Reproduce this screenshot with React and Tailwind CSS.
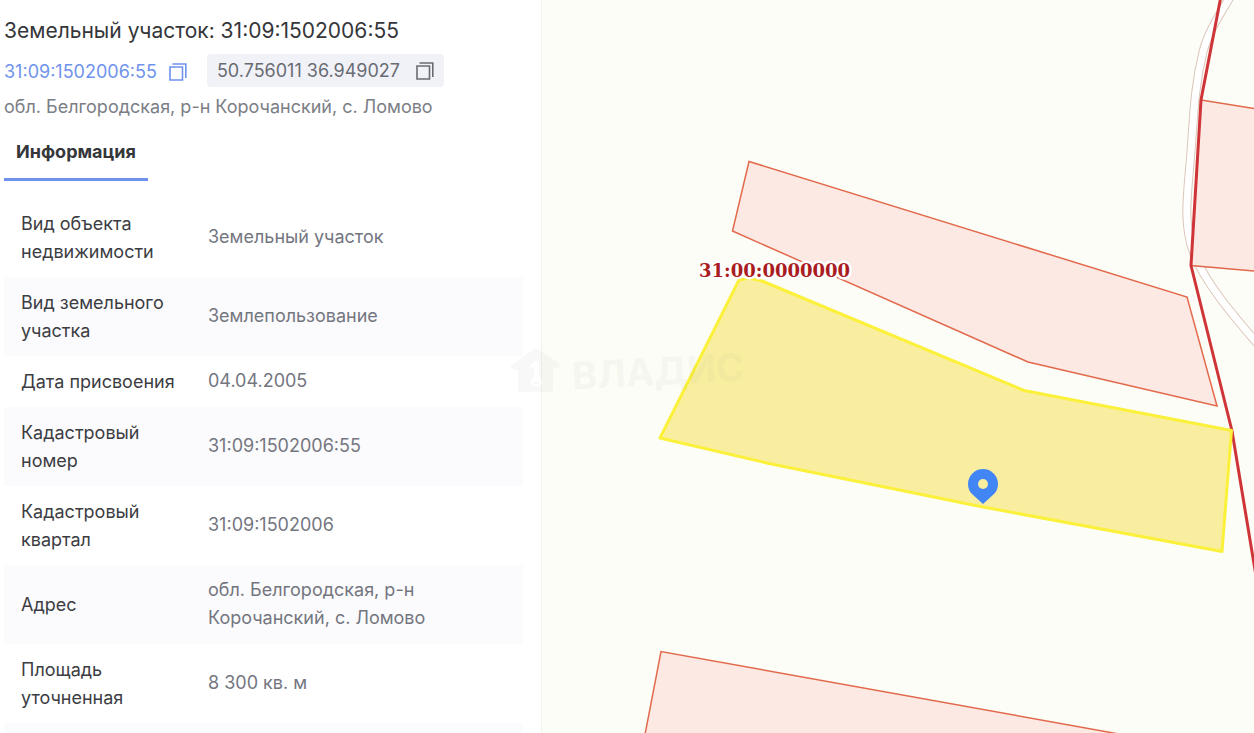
const rows = [
  { label: 'Вид объекта недвижимости', value: 'Земельный участок' },
  { label: 'Вид земельного участка', value: 'Землепользование' },
  { label: 'Дата присвоения', value: '04.04.2005' },
  { label: 'Кадастровый номер', value: '31:09:1502006:55' },
  { label: 'Кадастровый квартал', value: '31:09:1502006' },
  { label: 'Адрес', value: 'обл. Белгородская, р-н Корочанский, с. Ломово' },
  { label: 'Площадь уточненная', value: '8 300 кв. м' },
];

function CopyIcon() {
  return (
    <svg width="18" height="18" viewBox="0 0 18 18" fill="none" stroke="currentColor" aria-hidden="true">
      <path d="M1 4h12.500v13H1z" strokeWidth="1.6" />
      <path d="M3.500 1h13.300v14" strokeWidth="1.6" />
    </svg>
  );
}

function InfoTable() {
  return (
    <table className="mt-[17px] w-full table-fixed text-left text-lg leading-7">
      <tbody>
        {rows.map((row) => (
          <tr key={row.label} className="even:bg-[#fbfbfd]">
            <th scope="row" className="w-[188px] pt-3 pr-2 pb-[11px] pl-[17px] align-middle font-normal text-[#3c3d42]">{row.label}</th>
            <td className="pt-[11px] pr-4 pb-3 pl-4 align-middle text-[#74767f]">{row.value}</td>
          </tr>
        ))}
        <tr className="h-10 bg-[#fbfbfd]">
          <td colSpan="2" />
        </tr>
      </tbody>
    </table>
  );
}

function InfoPanel() {
  return (
    <aside className="w-[541px] shrink-0 overflow-hidden bg-white pr-[18px] pl-1">
      <h1 className="pt-[17px] text-[21px] leading-7 text-[#35363a]">Земельный участок: 31:09:1502006:55</h1>
      <div className="mt-[9px] flex h-[33px] items-center gap-5">
        <button type="button" className="flex items-center gap-3 pt-0.5 text-lg leading-7 text-[#6f93ec]">
          31:09:1502006:55
          <CopyIcon />
        </button>
        <button type="button" className="flex h-full items-center gap-4 rounded bg-[#f1f2f8] px-2.5 text-lg leading-7 text-[#696b73]">
          50.756011 36.949027
          <CopyIcon />
        </button>
      </div>
      <p className="mt-1.5 text-lg leading-7 text-[#7c7e86]">обл. Белгородская, р-н Корочанский, с. Ломово</p>
      <nav className="mt-4 flex">
        <button type="button" className="h-11 border-b-3 border-[#6f93ec] px-3 pb-3 text-lg leading-7 font-bold text-[#35363a]">Информация</button>
      </nav>
      <InfoTable />
    </aside>
  );
}

function ParcelMap() {
  return (
    <main className="min-w-0 flex-1 overflow-hidden border-l border-[#f1f2ec] bg-[#fcfdf6]">
      <svg className="h-full w-full" viewBox="542 0 712 733" preserveAspectRatio="xMinYMin slice" role="img" aria-label="31:00:0000000">
        {/* road */}
        <path d="M1232 -6C1220 14 1208 32 1203 52C1195 84 1194 110 1191 152C1188 192 1182 222 1194 254C1205 282 1230 312 1262 349" fill="none" stroke="#dcc6bb" strokeWidth="9" />
        <path d="M1232 -6C1220 14 1208 32 1203 52C1195 84 1194 110 1191 152C1188 192 1182 222 1194 254C1205 282 1230 312 1262 349" fill="none" stroke="#ffffff" strokeWidth="7" />

        {/* neighbouring parcels */}
        <g fill="#fce9e4" stroke="#e2694c" strokeWidth="1.5">
          <path d="M749 161.500L1187 297L1217 406L1028 362L732.500 231Z" />
          <path d="M1201 100L1264 110V272L1191 265.500Z" />
          <path d="M643 745L661 651.500L1180 745Z" />
        </g>

        {/* quarter border */}
        <path d="M1221 -4L1201 100L1191 265.500L1232 431L1256 576" fill="none" stroke="#cf3438" strokeWidth="3" strokeLinejoin="round" />

        {/* selected parcel */}
        <path d="M739 280L749 278L762 281L1024 390.500L1231.500 430.500L1222 551.500L983 507L769 463.500L660 438Z" fill="#f9eea0" stroke="#fbf03a" strokeWidth="3" strokeLinejoin="round" />

        <text x="699" y="277" fontSize="18" fontWeight="700" fill="#a91d22" stroke="#ffffff" strokeWidth="5" strokeLinejoin="round" paintOrder="stroke" className="font-['DejaVu_Serif',serif]">31:00:0000000</text>

        {/* marker */}
        <path d="M983 504L972 494Q968 490 968 484A15 15 0 0 1 998 484Q998 490 994 494Z" fill="#4285f4" />
        <circle cx="983" cy="484" r="5" fill="#f9eea0" />
      </svg>
    </main>
  );
}

function Watermark() {
  return (
    <div className="pointer-events-none absolute inset-0 flex items-center justify-center gap-3 pt-2 text-[#888888] opacity-5">
      <svg width="50" height="46" viewBox="0 0 50 46" fill="currentColor" aria-hidden="true">
        <path fillRule="evenodd" d="M24 1Q25 0 27 1L49 15Q51 18 48 20L43 19V42Q43 44 41 44H10Q8 44 8 42V22L3 21Q-1 20 2 17ZM25 13L19 18L20 20L24 19V29A6 5 0 1 0 29 29V13ZM24 34H29V36H24Z" />
      </svg>
      <span className="-rotate-3 text-[38px] leading-none font-bold">ВЛАДИС</span>
    </div>
  );
}

export default function App() {
  return (
    <div className="relative flex h-screen overflow-hidden font-['Inter',sans-serif]">
      <InfoPanel />
      <ParcelMap />
      <Watermark />
    </div>
  );
}
